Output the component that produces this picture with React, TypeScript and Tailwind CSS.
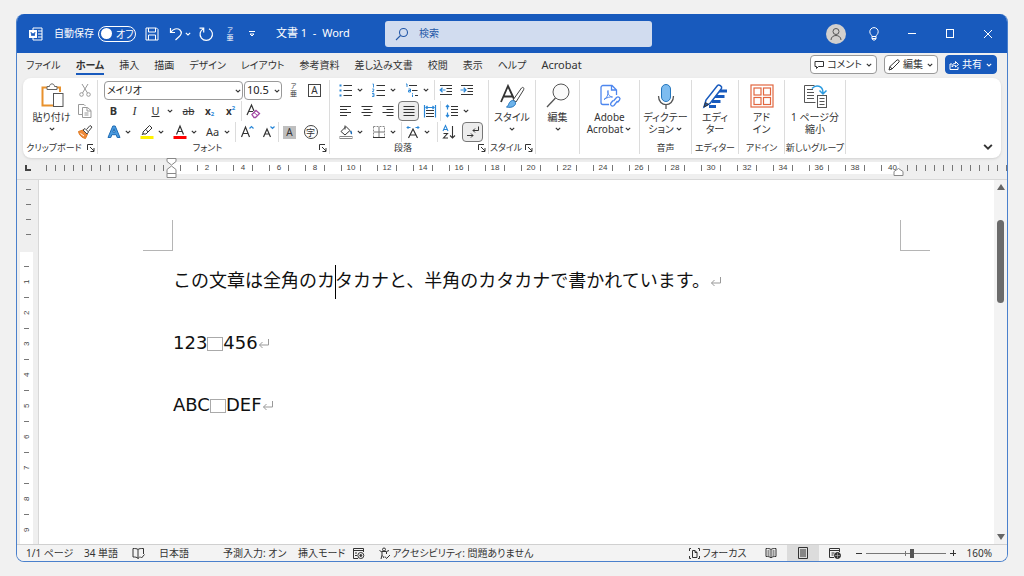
import type { ReactNode } from "react";

const tabs = [
  "ファイル",
  "ホーム",
  "挿入",
  "描画",
  "デザイン",
  "レイアウト",
  "参考資料",
  "差し込み文書",
  "校閲",
  "表示",
  "ヘルプ",
  "Acrobat",
];

const paragraphs = [["123", "456"], ["ABC", "DEF"]];

function Chevron({ className = "w-2 h-2" }: { className?: string }) {
  return (
    <svg viewBox="0 0 8 8" className={`shrink-0 ${className}`} fill="none" stroke="currentColor" strokeWidth="1.1">
      <path d="M1.8 2.8 4 5l2.2-2.2" />
    </svg>
  );
}

function Icon({ children, size = 16 }: { children: ReactNode; size?: number }) {
  return (
    <svg
      width={size}
      height={size}
      viewBox={`0 0 ${size} ${size}`}
      className="shrink-0"
      fill="none"
      stroke="currentColor"
      strokeWidth="1"
    >
      {children}
    </svg>
  );
}

function Tool({ label, active, children }: { label: string; active?: boolean; children: ReactNode }) {
  return (
    <button
      type="button"
      aria-label={label}
      className={`flex h-5 w-[21px] shrink-0 items-center justify-center ${
        active ? "rounded border border-[#777] bg-[#ececec]" : ""
      }`}
    >
      {children}
    </button>
  );
}

function Drop({ label }: { label: string }) {
  return (
    <button type="button" aria-label={label} className="flex h-5 w-3 shrink-0 items-center">
      <Chevron />
    </button>
  );
}

function Sep() {
  return <div className="h-5 w-px shrink-0 bg-[#dcdcdc]" />;
}

function Group({
  label,
  launcher,
  className,
  children,
}: {
  label: string;
  launcher?: boolean;
  className: string;
  children: ReactNode;
}) {
  return (
    <section className={`flex shrink-0 flex-col border-r border-[#dcdcdc] ${className}`}>
      <div className="flex h-[63px] w-full">{children}</div>
      <div className="flex h-3 items-center">
        <div className="flex flex-1 justify-center text-[9px] leading-3 whitespace-nowrap">{label}</div>
        {launcher && (
          <button type="button" aria-label={`${label}の設定`} className="flex w-3 justify-center">
            <svg width="8" height="8" viewBox="0 0 8 8" fill="none" stroke="currentColor">
              <path d="M.5 6V.5H6M3 3l4 4M7 4v3.500H3.500" />
            </svg>
          </button>
        )}
      </div>
    </section>
  );
}

function BigButton({ icon, lines, drop }: { icon: ReactNode; lines: string[]; drop?: "below" | "inline" }) {
  return (
    <button type="button" className="flex flex-1 flex-col items-center text-[10px] leading-3 whitespace-nowrap">
      <span className="flex h-[31px] items-center justify-center">{icon}</span>
      {lines.map((line, i) => (
        <span key={line} className="flex h-3 items-center gap-px">
          {line}
          {drop === "inline" && i === lines.length - 1 && <Chevron />}
        </span>
      ))}
      {drop === "below" && <Chevron className="mt-0.5 h-2 w-2" />}
    </button>
  );
}

function RubyIcon() {
  return (
    <span className="flex flex-col items-center">
      <span className="text-[6px] leading-[8px]">ア</span>
      <span className="text-[7px] leading-[8px]">亜</span>
    </span>
  );
}

function TitleBar() {
  return (
    <header className="grid h-[39px] shrink-0 grid-cols-[368px_minmax(0,267px)_1fr] items-center bg-[#185abd] text-white">
      <div className="flex items-center pl-[11px] text-[11px] whitespace-nowrap">
        <Icon>
          <path d="M5 4.500V2h9v12H5v-2.500M10 5h4M10 8h4M10 11h4" />
          <rect x="1.500" y="4.500" width="7" height="7" fill="#fff" />
          <path d="m3 6 1 4 1-3 1 3 1-4" stroke="#185abd" />
        </Icon>
        <span className="ml-2.5 text-[10px]">自動保存</span>
        <button
          type="button"
          role="switch"
          aria-checked="false"
          aria-label="自動保存"
          className="ml-1 flex h-4 w-[38px] shrink-0 items-center gap-1 rounded-full border border-white px-0.5 text-[10px] leading-3"
        >
          <span className="h-[11px] w-[11px] shrink-0 rounded-full bg-white" />
          オフ
        </button>
        <button type="button" aria-label="保存" className="ml-2">
          <Icon>
            <path d="M2 2h10.500L14 3.500V14H2zM4.500 2v4h7V2M4.500 14V9h7v5" />
          </Icon>
        </button>
        <button type="button" aria-label="元に戻す" className="ml-2">
          <Icon>
            <path strokeWidth="1.200" d="M2.500 2v4.500H7M2.800 6.300C5 3 9 1.500 12 4c2.500 2.500 1 5-1 6.800L7.500 14" />
          </Icon>
        </button>
        <Chevron />
        <button type="button" aria-label="やり直し" className="ml-1.5">
          <Icon>
            <path strokeWidth="1.200" d="M5.500 2.700A6.200 6.200 0 1 0 11 2.700M1.500 2.200h4.200v4.300" />
          </Icon>
        </button>
        <button type="button" aria-label="ルビ" className="ml-2.5 flex w-3 justify-center">
          <RubyIcon />
        </button>
        <button type="button" aria-label="クイック アクセスのカスタマイズ" className="ml-3">
          <Icon size={8}>
            <path d="M1 1.500h6M2 4l2 2 2-2z" />
          </Icon>
        </button>
        <h1 className="ml-5 whitespace-pre">文書 1  -  Word</h1>
      </div>
      <label className="flex h-[26px] items-center gap-2.5 rounded-[3px] bg-[#d1dcef] px-2.5 text-[#2559a8]">
        <Icon size={14}>
          <circle cx="8.500" cy="5.500" r="4" strokeWidth="1.100" />
          <path d="M5.500 8.500 1 13" strokeWidth="1.100" />
        </Icon>
        <input
          type="search"
          aria-label="検索"
          placeholder="検索"
          className="min-w-0 flex-1 bg-transparent text-[10px] outline-none placeholder:text-[#2559a8]"
        />
      </label>
      <div className="flex items-center justify-end pr-[11px]">
        <button
          type="button"
          aria-label="アカウント"
          className="flex h-5 w-5 items-center justify-center rounded-full bg-[#d2d0ce] text-[#555]"
        >
          <Icon size={14}>
            <circle cx="7" cy="4.500" r="3" />
            <path d="M2 13c0-6 10-6 10 0" />
          </Icon>
        </button>
        <button type="button" aria-label="ヒント" className="ml-5">
          <Icon>
            <path d="M6 10.500C6 9 3.800 8.300 3.800 5.800a4.200 4.200 0 0 1 8.400 0C12.200 8.300 10 9 10 10.500zM6 10.500v2l1 1.500h2l1-1.500v-2M6 12.500h4" />
          </Icon>
        </button>
        <button type="button" aria-label="最小化" className="ml-[22px]">
          <Icon>
            <path d="M4 7.500h8" />
          </Icon>
        </button>
        <button type="button" aria-label="最大化" className="ml-[22px]">
          <Icon>
            <rect x="4.500" y="3.500" width="7" height="8" />
          </Icon>
        </button>
        <button type="button" aria-label="閉じる" className="ml-[22px]">
          <Icon>
            <path d="m4 4 8 8M12 4l-8 8" />
          </Icon>
        </button>
      </div>
    </header>
  );
}

function TabBar() {
  const pill = "flex h-[19px] items-center gap-[3px] rounded border px-[3px] text-[10px] whitespace-nowrap";
  return (
    <nav className="flex h-[25px] shrink-0 items-start justify-between pt-0.5 pr-2.5 pl-[9px]">
      <div className="flex items-center gap-[15px] text-[10px] whitespace-nowrap">
        {tabs.map((tab) => (
          <a
            key={tab}
            href="#"
            className={`flex h-5 items-end border-b-2 leading-4 ${
              tab === "ホーム" ? "border-[#185abd] font-bold" : "border-transparent"
            } ${tab === "Acrobat" ? "text-[11px]" : ""}`}
          >
            {tab}
          </a>
        ))}
      </div>
      <div className="flex items-center gap-[7px]">
        <button type="button" className={`${pill} border-[#999] bg-white`}>
          <Icon size={10}>
            <path d="M1 1.500h8.500v5H4.500l-2 2v-2H1z" />
          </Icon>
          コメント
          <Chevron />
        </button>
        <button type="button" className={`${pill} border-[#999] bg-white`}>
          <Icon size={12}>
            <path d="m1 11 1-3.500 7-6.500c1-1 3 1 2 2L4 10zM2 7.500 4 10" />
          </Icon>
          編集
          <Chevron />
        </button>
        <button type="button" className={`${pill} border-[#185abd] bg-[#185abd] text-white`}>
          <Icon size={10}>
            <path d="M3 4H1v5.500h8V7M3 7c0-3 1.500-3.500 3.500-3.500V1.500L9.500 4.500l-3 2.500V5.500C5 5.500 4 5.500 3 7z" />
          </Icon>
          共有
          <Chevron />
        </button>
      </div>
    </nav>
  );
}

function ClipboardGroup() {
  return (
    <Group label="クリップボード" launcher className="w-[75px]">
      <div className="flex w-[51px] pl-1.5">
        <BigButton
          lines={["貼り付け"]}
          drop="below"
          icon={
            <Icon size={26}>
              <path d="M8 4.500H3.500v18H14M18 4.500h3V9" stroke="#e8912d" strokeWidth="2" />
              <path d="M8 6.500V3.500h2.500c0-3.500 5-3.500 5 0H18v3z" fill="#fff" stroke="#666" />
              <rect x="14.500" y="10.500" width="9.500" height="13" fill="#fff" stroke="#555" />
            </Icon>
          }
        />
      </div>
      <div className="flex flex-col gap-px text-[#999]">
        <Tool label="切り取り">
          <Icon>
            <path d="m5 2 5.500 9M11 2 5.500 11" />
            <circle cx="4.500" cy="12.500" r="1.800" />
            <circle cx="11.500" cy="12.500" r="1.800" />
          </Icon>
        </Tool>
        <Tool label="コピー">
          <Icon>
            <path d="M5.500 11.500h-4v-10H7L8.500 3M5.500 4.500h5l3.500 3v7H5.500zM10 4.500v3.500h4M7.500 10h4M7.500 12h4" />
          </Icon>
        </Tool>
        <Tool label="書式のコピー/貼り付け">
          <Icon>
            <path d="M1.500 7.500 6 6l4.500 4-2 4.500C5 14 2 11 1.500 7.500z" fill="#ee8a3a" stroke="#e07b23" />
            <path d="m3.500 9.500 3.500 2.500" stroke="#fff" />
            <path d="m6 6 2-1.500 3.500 3.500-1.500 2zM9.500 5.500 13 1.500l2 1.500-3.500 4.500" fill="#fff" stroke="#444" />
          </Icon>
        </Tool>
      </div>
    </Group>
  );
}

function FontGroup() {
  const select =
    "block h-[19px] w-full appearance-none rounded border border-[#999] bg-white pl-0.5 leading-4 text-[#222]";
  return (
    <Group label="フォント" launcher className="w-[232px]">
      <div className="flex flex-col gap-px pl-[5px]">
        <div className="flex h-5 items-center">
          <div className="relative ml-px w-[139px]">
            <select aria-label="フォント名" className={`${select} text-[10px]`}>
              <option>メイリオ</option>
            </select>
            <Chevron className="pointer-events-none absolute top-1.5 right-px h-2 w-2" />
          </div>
          <div className="relative mr-px ml-px w-[38px]">
            <select aria-label="フォント サイズ" className={`${select} text-[11px]`}>
              <option>10.5</option>
            </select>
            <Chevron className="pointer-events-none absolute top-1.5 right-px h-2 w-2" />
          </div>
          <Tool label="ルビ">
            <RubyIcon />
          </Tool>
          <Tool label="囲み線">
            <span className="flex h-[13px] w-[13px] items-center justify-center border border-[#444] text-[10px] leading-none">
              A
            </span>
          </Tool>
        </div>
        <div className="flex h-5 items-center">
          <Tool label="太字">
            <b className="text-[11px]">B</b>
          </Tool>
          <Tool label="斜体">
            <i className="font-['Liberation_Serif',serif] text-[12px]">I</i>
          </Tool>
          <Tool label="下線">
            <u className="text-[11px]">U</u>
          </Tool>
          <Drop label="下線の種類" />
          <Tool label="取り消し線">
            <s className="text-[10px]">ab</s>
          </Tool>
          <Tool label="下付き">
            <span className="flex items-end text-[10px] leading-[14px] font-bold">
              x<span className="text-[6px] leading-[8px] text-[#2b88d8]">2</span>
            </span>
          </Tool>
          <Tool label="上付き">
            <span className="flex items-start text-[10px] leading-[14px] font-bold">
              x<span className="text-[6px] leading-[8px] text-[#2b88d8]">2</span>
            </span>
          </Tool>
          <Sep />
          <Tool label="書式のクリア">
            <Icon>
              <path d="M2 12 6.500 2 9 8M3.500 8.500H8" strokeWidth="1.200" />
              <path d="m7 11.500 4-4 3.500 3-4 4H9z" fill="#fff" stroke="#a349a4" strokeWidth="1.300" />
              <path d="m9 9.500 3.500 3" stroke="#a349a4" />
            </Icon>
          </Tool>
        </div>
        <div className="flex h-5 items-center">
          <Tool label="文字の効果">
            <Icon>
              <path
                d="M2 13.500 6.800 2h2.400L14 13.500h-2.800l-1-2.800H5.800l-1 2.800zM6.800 8.200h2.400L8 4.800z"
                fill="#4a9be0"
                stroke="#1f6cb5"
              />
            </Icon>
          </Tool>
          <Drop label="文字の効果のオプション" />
          <Tool label="蛍光ペン">
            <Icon>
              <path d="M4 10V8l6.500-6.500 2.500 2.500L7 10zM7 5.500 9 8M4 9.500 3 11" />
              <path d="M1.500 13.500h13" stroke="#fff200" strokeWidth="3" />
            </Icon>
          </Tool>
          <Drop label="蛍光ペンの色" />
          <Tool label="フォントの色">
            <Icon>
              <path d="M4.500 10.500 8 2l3.500 8.500M5.500 7.500h5" strokeWidth="1.200" />
              <path d="M1.500 13.500h13" stroke="#f00" strokeWidth="3" />
            </Icon>
          </Tool>
          <Drop label="フォントの色のオプション" />
          <Tool label="文字種の変換">
            <span className="text-[11px]">Aa</span>
          </Tool>
          <Drop label="文字種の変換のオプション" />
          <Sep />
          <Tool label="フォント サイズの拡大">
            <Icon>
              <path d="M2.500 13 6.500 3l4 10M4 9.500h5" strokeWidth="1.200" />
              <path d="m10.500 4.500 2-2 2 2" stroke="#2b88d8" strokeWidth="1.200" />
            </Icon>
          </Tool>
          <Tool label="フォント サイズの縮小">
            <Icon>
              <path d="M3.500 13 7 5l3.500 8M5 10h4" strokeWidth="1.200" />
              <path d="m10.500 2.500 2 2 2-2" stroke="#2b88d8" strokeWidth="1.200" />
            </Icon>
          </Tool>
          <Sep />
          <Tool label="文字の網かけ">
            <span className="flex h-[13px] w-[13px] items-center justify-center bg-[#bfbfbf] text-[10px] leading-none">
              A
            </span>
          </Tool>
          <Tool label="囲い文字">
            <span className="flex h-[14px] w-[14px] items-center justify-center rounded-full border border-[#444] text-[9px] leading-none">
              字
            </span>
          </Tool>
        </div>
      </div>
    </Group>
  );
}

function ParagraphGroup() {
  return (
    <Group label="段落" launcher className="w-[159px]">
      <div className="flex flex-col gap-px pl-[5px]">
        <div className="flex h-5 items-center">
          <Tool label="箇条書き">
            <Icon>
              <path d="M5.500 3.500H14M5.500 8.500H14M5.500 13.500H14" />
              <path d="M1.500 3.500h2M1.500 8.500h2M1.500 13.500h2" stroke="#2b88d8" strokeWidth="2" />
            </Icon>
          </Tool>
          <Drop label="箇条書きライブラリ" />
          <Tool label="段落番号">
            <Icon>
              <path d="M5.500 3.500H14M5.500 8.500H14M5.500 13.500H14" />
              <path
                d="M1.500 2h1v3.500M1.200 7h1.600v1.300l-1.600 1.400H3M1 11.500h2v3H1M1.500 13H3"
                stroke="#2b88d8"
                strokeWidth=".9"
              />
            </Icon>
          </Tool>
          <Drop label="番号ライブラリ" />
          <Tool label="アウトライン">
            <Icon>
              <path d="M5 3.500h8M8 8.500h5.500M11 13.500h3" />
              <path d="M2 2h1v3M4.500 7h2v3h-2V8.500h2M8.500 11v.8M8.500 12.500v2.500" stroke="#2b88d8" />
            </Icon>
          </Tool>
          <Drop label="リスト ライブラリ" />
          <Sep />
          <Tool label="インデントを減らす">
            <Icon size={14}>
              <path d="M1 2.500h12M7.500 5.500H13M7.500 8.500H13M1 11.500h12" />
              <path d="M6.500 7H1M3.500 4.800 1.200 7l2.300 2.200" stroke="#2b88d8" strokeWidth="1.200" />
            </Icon>
          </Tool>
          <Tool label="インデントを増やす">
            <Icon size={14}>
              <path d="M1 2.500h12M7.500 5.500H13M7.500 8.500H13M1 11.500h12" />
              <path d="M.5 7H6M3.700 4.800 6 7 3.700 9.200" stroke="#2b88d8" strokeWidth="1.200" />
            </Icon>
          </Tool>
        </div>
        <div className="flex h-5 items-center">
          <Tool label="左揃え">
            <Icon>
              <path d="M2 3.500h11M2 6.500h7M2 9.500h11M2 12.500h7" />
            </Icon>
          </Tool>
          <Tool label="中央揃え">
            <Icon>
              <path d="M2.500 3.500h11M4.500 6.500h7M2.500 9.500h11M4.500 12.500h7" />
            </Icon>
          </Tool>
          <Tool label="右揃え">
            <Icon>
              <path d="M2.500 3.500h11M6.500 6.500h7M2.500 9.500h11M6.500 12.500h7" />
            </Icon>
          </Tool>
          <Tool label="両端揃え" active>
            <Icon>
              <path d="M2.500 3.500h11M2.500 6.500h11M2.500 9.500h11M2.500 12.500h11" />
            </Icon>
          </Tool>
          <Tool label="均等割り付け">
            <Icon>
              <path d="M4 7.500h8M4 10.500h8M4 13.500h8" />
              <path
                d="M2.500 2v12.500M13.500 2v12.500M4 4.500h8M5.500 3 4 4.500 5.500 6M10.500 3 12 4.500 10.500 6"
                stroke="#2b88d8"
                strokeWidth="1.200"
              />
            </Icon>
          </Tool>
          <Sep />
          <Tool label="行と段落の間隔">
            <Icon>
              <path d="M7 3.500h7M7 6.500h7M7 9.500h7M7 12.500h7" />
              <path d="M3.500 2.500v4M3.500 9.500v4M2 4l1.500-1.800L5 4M2 12l1.500 1.800L5 12" stroke="#2b88d8" strokeWidth="1.200" />
            </Icon>
          </Tool>
          <Drop label="間隔のオプション" />
        </div>
        <div className="flex h-5 items-center">
          <Tool label="塗りつぶし">
            <Icon>
              <path d="m3 7.500 5-5 4 4-5 4.500zM7 1.500v4" />
              <path d="M12.500 7c1 1.500 1.500 2.300.5 3" stroke="#1f6cb5" strokeWidth="1.500" />
              <rect x="2" y="12.500" width="12" height="2" stroke="#888" fill="#fff" />
            </Icon>
          </Tool>
          <Drop label="塗りつぶしの色" />
          <Tool label="罫線">
            <Icon>
              <path d="M2.500 2.500h11v11M2.500 2.500v11" stroke="#888" strokeDasharray="2 1" />
              <path d="M8 3v10M3 8h10" stroke="#777" />
              <path d="M2 13.500h12" />
            </Icon>
          </Tool>
          <Drop label="罫線の種類" />
          <Sep />
          <Tool label="拡張書式">
            <Icon>
              <path d="m3.500 14 4.500-9 4.500 9M5 11h6" strokeWidth="1.200" />
              <path d="M2 3.500h3.500M10.500 3.500H14M3.500 2 2 3.500 3.500 5M12.500 2 14 3.500 12.500 5" stroke="#2b88d8" />
            </Icon>
          </Tool>
          <Drop label="拡張書式のオプション" />
          <div className="flex pl-0.5">
            <Sep />
          </div>
          <Tool label="並べ替え">
            <Icon>
              <path d="m2 7 2.500-5.500L7 7M3 5.500h3" stroke="#2b88d8" strokeWidth="1.100" />
              <path d="M2.500 9.500h4l-4 4.500h4.500M11.500 2v12M9 11.500l2.500 2.500 2.500-2.500" strokeWidth="1.100" />
            </Icon>
          </Tool>
          <div className="pl-[3px]">
            <Tool label="編集記号の表示/非表示" active>
              <Icon>
                <path d="M13.500 2.500v4H8M10 4.500l-2 2 2 2M2 11.500h6M6 9.500l2 2-2 2" />
              </Icon>
            </Tool>
          </div>
        </div>
      </div>
    </Group>
  );
}

function Ribbon() {
  return (
    <div className="mx-1.5 flex h-20 shrink-0 rounded-lg bg-white pt-0.5 pb-1 shadow-sm">
      <ClipboardGroup />
      <FontGroup />
      <ParagraphGroup />
      <Group label="スタイル" launcher className="w-[47px]">
        <BigButton
          lines={["スタイル"]}
          drop="below"
          icon={
            <Icon size={26}>
              <path d="M2 19 9 3l6 13M4.500 13.500h9" stroke="#333" strokeWidth="1.800" />
              <path d="m14 17 8.500-12c1.500-1.500 3 0 2 2L17 19z" fill="#fff" stroke="#444" />
              <path d="M7.500 24c2.500-1 2-6 6-6.500 3 0 4 3 2 5s-5 2.200-8 1.500z" fill="#6db3ea" stroke="#2576bd" />
            </Icon>
          }
        />
      </Group>
      <Group label="" className="w-[44px]">
        <BigButton
          lines={["編集"]}
          drop="below"
          icon={
            <Icon size={26}>
              <circle cx="16" cy="9" r="8" fill="#fafafa" stroke="#555" />
              <path d="M10.500 15 2 24" stroke="#555" strokeWidth="1.300" />
            </Icon>
          }
        />
      </Group>
      <Group label="" className="w-[60px]">
        <BigButton
          lines={["Adobe", "Acrobat"]}
          drop="inline"
          icon={
            <Icon size={26}>
              <path
                d="M12 21.500H6a2 2 0 0 1-2-2v-15a2 2 0 0 1 2-2h9l4.500 4.500v5M14.500 2.500V7h5"
                stroke="#4d86ee"
                strokeWidth="1.300"
              />
              <path d="M7 16.500c3-1.500 4.500-5 4-9-1 2.500 1.500 6.500 4.500 6.500-2-.5-6 .5-8.500 2.500z" stroke="#4d86ee" />
              <path
                d="m16.500 18 3-3.500c2-1.500 4.500.5 3 2.500l-2 2.500M20.500 18l-3.500 4.500c-2 1.500-4.500-.5-3-2.500l2-2.500"
                stroke="#4d86ee"
                strokeWidth="1.300"
              />
            </Icon>
          }
        />
      </Group>
      <Group label="音声" className="w-[52px]">
        <BigButton
          lines={["ディクテー", "ション"]}
          drop="inline"
          icon={
            <Icon size={26}>
              <rect x="8.500" y="1.500" width="9" height="17" rx="4.500" fill="#7dbcf0" stroke="#2576bd" />
              <path d="M5.500 13c0 11.500 15 11.500 15 0M13 21.500V26" stroke="#555" strokeWidth="1.300" />
            </Icon>
          }
        />
      </Group>
      <Group label="エディター" className="w-[47px]">
        <BigButton
          lines={["エディ", "ター"]}
          icon={
            <Icon size={26}>
              <path d="M15 8h10M13 13.500h9.500M10 18.500h8.500M7 23.500h7" stroke="#185abd" strokeWidth="3" />
              <path d="m2 24 2-7L15.500 2.500c1.500-1.500 5 1 4 3L8 20.500z" fill="#fff" stroke="#185abd" strokeWidth="1.500" />
              <path d="m2 24 1.500-4.500 3 2z" fill="#185abd" />
            </Icon>
          }
        />
      </Group>
      <Group label="アドイン" className="w-[46px]">
        <BigButton
          lines={["アド", "イン"]}
          icon={
            <Icon size={26}>
              <g stroke="#e2663f" strokeWidth="1.200">
                <rect x="2" y="2" width="22" height="22" />
                <rect x="5" y="5" width="7" height="7" />
                <rect x="14.500" y="5" width="7" height="7" />
                <rect x="5" y="14.500" width="7" height="7" />
                <rect x="14.500" y="14.500" width="7" height="7" />
              </g>
            </Icon>
          }
        />
      </Group>
      <Group label="新しいグループ" className="w-[61px]">
        <BigButton
          lines={["1 ページ分", "縮小"]}
          icon={
            <Icon size={26}>
              <path d="M13.500 19.500h-11v-17h10M5 6.500h6M5 9.500h7M5 12.500h7M5 15.500h7" stroke="#555" />
              <rect x="15.500" y="12.500" width="9" height="12" fill="#fff" stroke="#555" />
              <path d="M17.500 15.500h5M17.500 18.500h5M17.500 21.500h5" stroke="#555" />
              <path d="M10 5.500C14 1 21 2.500 21 10M17.500 7.500 21 11l3.500-3.500" stroke="#2b9be0" strokeWidth="1.500" />
            </Icon>
          }
        />
      </Group>
      <button type="button" aria-label="リボンの表示オプション" className="mr-1.5 ml-auto self-end">
        <Chevron className="h-3.5 w-3.5" />
      </button>
    </div>
  );
}

function Tick() {
  return <span className="h-1.5 w-px bg-[#777]" />;
}

function HorizontalRuler() {
  const marks = Array.from({ length: 19 }, (_, i) => (i + 1) * 2);
  return (
    <div className="flex h-[22px] shrink-0 items-center overflow-hidden border-b border-[#d8d8d8] pb-0.5 font-['Liberation_Sans',sans-serif] text-[8px] leading-3 text-[#444]">
      <span className="flex w-[25px] shrink-0 pl-2">
        <span className="h-1.5 w-1.5 border-b-2 border-l-2 border-[#444]" />
      </span>
      <div className="flex w-[129px] shrink-0">
        {Array.from({ length: 14 }, (_, i) => (
          <span key={i} className="flex w-[9px] justify-center">
            <Tick />
          </span>
        ))}
      </div>
      <div className="relative flex h-3 w-[728px] shrink-0 items-center bg-white">
        <span className="flex w-[18px] shrink-0 justify-center">
          <Tick />
        </span>
        {marks.map((n) => (
          <span key={n} className="flex w-9 shrink-0 items-center justify-between px-2">
            <Tick />
            {n}
            <Tick />
          </span>
        ))}
        <span className="flex w-[26px] shrink-0 items-center justify-between pr-0.5 pl-2">
          <Tick />
          40
        </span>
        <svg width="11" height="20" viewBox="0 0 11 20" className="absolute -top-1 -left-[5px]" fill="#fff" stroke="#888">
          <path d="M1 .5h9v3L5.500 7 1 3.500zM1 15.500v-4L5.500 8 10 11.500v4zM1 15.500h9v4H1z" />
        </svg>
        <svg width="11" height="9" viewBox="0 0 11 9" className="absolute top-1.5 -right-[5px]" fill="#fff" stroke="#888">
          <path d="M1 7.500v-4L5.500.5 10 3.500v4z" />
        </svg>
      </div>
      <div className="flex pl-1">
        {Array.from({ length: 12 }, (_, i) => (
          <span key={i} className="flex w-[9px] shrink-0 justify-center">
            <Tick />
          </span>
        ))}
      </div>
    </div>
  );
}

function VerticalRuler() {
  return (
    <div className="flex w-[22px] shrink-0 flex-col overflow-hidden border-r border-[#d8d8d8] pl-[3px] font-['Liberation_Sans',sans-serif] text-[8px] text-[#444]">
      <div className="flex h-[72px] w-[13px] shrink-0 flex-col items-center gap-[14px] pt-[9px] pl-1">
        {[0, 1, 2, 3].map((i) => (
          <span key={i} className="h-px w-[5px] shrink-0 bg-[#777]" />
        ))}
      </div>
      <div className="flex w-[13px] flex-1 flex-col items-center overflow-hidden bg-white pt-3.5">
        {[1, 2, 3, 4, 5, 6, 7, 8, 9].map((n) => (
          <span key={n} className="flex h-[31px] shrink-0 flex-col items-center">
            <span className="h-px w-[5px] bg-[#777]" />
            <span className="flex flex-1 rotate-180 items-center justify-center leading-3 [writing-mode:vertical-rl]">
              {n}
            </span>
          </span>
        ))}
      </div>
    </div>
  );
}

function ReturnMark() {
  return (
    <svg width="12" height="12" viewBox="0 0 12 12" className="inline-block align-middle" fill="none" stroke="#999">
      <path d="M10.500 1v6H1.500M4.500 4l-3 3 3 3" />
    </svg>
  );
}

function Document() {
  return (
    <main className="min-w-0 flex-1 overflow-hidden bg-white pt-10">
      <div className="-mb-px flex justify-between pr-16 pl-[104px]">
        <span className="h-[31px] w-[30px] border-r border-b border-[#b5b5b5]" />
        <span className="h-[31px] w-[30px] border-b border-l border-[#b5b5b5]" />
      </div>
      <div className="pl-[134px] font-['DejaVu_Sans','Noto_Sans_CJK_JP',sans-serif] text-[18px] leading-[62px] whitespace-nowrap text-[#111] [font-feature-settings:normal]">
        <p>
          この文章は全角のカ
          <span className="-mr-px inline-block h-[34px] w-px bg-black align-middle" />
          タカナと、半角のカタカナで書かれています。
          <ReturnMark />
        </p>
        {paragraphs.map(([before, after]) => (
          <p key={before}>
            {before}
            <span className="inline-block h-3.5 w-4 border border-[#aaa] align-middle" />
            {after}
            <ReturnMark />
          </p>
        ))}
      </div>
    </main>
  );
}

function ScrollBar() {
  return (
    <div className="flex w-[13px] shrink-0 flex-col items-center bg-[#f3f3f3] py-1 text-[#666]">
      <svg width="8" height="6" viewBox="0 0 8 6" fill="currentColor">
        <path d="M4 0 8 6H0z" />
      </svg>
      <div className="mt-[30px] h-[83px] w-[7px] rounded-full bg-[#6b6b6b]" />
      <svg width="8" height="6" viewBox="0 0 8 6" className="mt-auto" fill="currentColor">
        <path d="M0 0h8L4 6z" />
      </svg>
    </div>
  );
}

function StatusBar() {
  return (
    <footer className="flex h-[17px] shrink-0 items-center justify-between border-t border-[#d0d0d0] bg-[#f3f3f3] pr-[15px] pl-[9px] text-[10px] leading-3 whitespace-nowrap">
      <div className="flex items-center">
        <span className="w-[58px]">1/1 ページ</span>
        <span className="w-12">34 単語</span>
        <span className="w-[27px]">
          <Icon size={13}>
            <path d="M6 2.500C5 1.500 3 1.500 1 1.500v8.500c2 0 4 0 5 1.500V2.500C7 1.500 9 1.500 11.500 1.500V7M6 11.500l1.500-1M8 9.500l1.500 1.500 3-3.500" />
          </Icon>
        </span>
        <span className="w-16">日本語</span>
        <span className="w-[75px]">予測入力: オン</span>
        <span className="w-[54px]">挿入モード</span>
        <span className="w-[26px]">
          <Icon size={13}>
            <path d="M6 11.500H1.500v-10h10V5M1.500 3.500h10M3 6h2M3 8.500h2" />
            <circle cx="8.800" cy="8.500" r="3" />
            <circle cx="8.800" cy="8.500" r="1" fill="currentColor" />
          </Icon>
        </span>
        <span className="flex items-center gap-px">
          <Icon size={13}>
            <path d="M1.500 3.500 4 5v3L3 12M4 4.500h4.500L11 3.500M8.500 5v2M4.500 8.500 6 11" />
            <circle cx="6" cy="2.500" r="1.500" />
            <path d="M7 9.500 8.500 11.500 12 8" />
          </Icon>
          アクセシビリティ: 問題ありません
        </span>
      </div>
      <div className="flex items-center">
        <button type="button" className="flex items-center gap-px">
          <Icon size={13}>
            <path d="M3 1.500H1.500V4M10 1.500h1.500V4M1.500 9v2.500H3M11.500 9v2.500H10M4.500 3.500h2.500L9 5.500v5H4.500zM7 3.500v2h2" />
          </Icon>
          フォーカス
        </button>
        <button type="button" aria-label="閲覧モード" className="ml-2 flex h-4 w-8 items-center justify-center">
          <Icon size={12}>
            <path d="M6 2.500C5 1.500 3 1.500 1 1.500v8c2 0 4 0 5 1.500 1-1.500 3-1.500 5-1.500v-8c-2 0-4 0-5 1zM6 2.500V11M2.500 4h2M2.500 6h2M7.500 4h2M7.500 6h2M2.500 8h2M7.500 8h2" />
          </Icon>
        </button>
        <button type="button" aria-label="印刷レイアウト" className="flex h-4 w-8 items-center justify-center bg-[#dcdcdc]">
          <Icon size={12}>
            <path d="M1.500.5h9v11h-9zM3 3h6M3 5h6M3 7h6M3 9h6" />
          </Icon>
        </button>
        <button type="button" aria-label="Web レイアウト" className="flex h-4 w-8 items-center justify-center">
          <Icon size={12}>
            <path d="M5 10.500H.5v-9h10V5M.5 3.500h10M2.500 6h3M2.500 8h2" />
            <circle cx="8.500" cy="8.500" r="3" fill="#333" />
            <path d="M8.500 6v5M6 8.500h5" stroke="#bbb" strokeWidth=".6" />
          </Icon>
        </button>
        <button type="button" aria-label="縮小" className="ml-1 flex h-4 w-2 items-center justify-center">
          <Icon size={8}>
            <path d="M1 4.500h6" />
          </Icon>
        </button>
        <input
          type="range"
          min={0}
          max={100}
          defaultValue={58}
          aria-label="ズーム"
          className="mx-[3px] h-3 w-20 appearance-none bg-[linear-gradient(#777,#777),linear-gradient(#777,#777)] bg-[length:100%_1px,1px_5px] bg-center bg-no-repeat [&::-webkit-slider-thumb]:h-[9px] [&::-webkit-slider-thumb]:w-1 [&::-webkit-slider-thumb]:appearance-none [&::-webkit-slider-thumb]:bg-[#555]"
        />
        <button type="button" aria-label="拡大" className="flex h-4 w-2 items-center justify-center">
          <Icon size={8}>
            <path d="M1 4.500h6M4.500 1v6" />
          </Icon>
        </button>
        <span className="ml-2.5">160%</span>
      </div>
    </footer>
  );
}

export default function App() {
  return (
    <div className="flex h-screen bg-[#f1f1f1] px-4 py-3.5 font-['Noto_Sans','Noto_Sans_CJK_JP',sans-serif] text-[#333] [font-feature-settings:'palt']">
      <div className="flex min-w-0 flex-1 flex-col overflow-hidden rounded-lg border border-t-0 border-[#4a80cc] bg-[#efefef]">
        <TitleBar />
        <TabBar />
        <Ribbon />
        <HorizontalRuler />
        <div className="flex min-h-0 flex-1">
          <VerticalRuler />
          <Document />
          <ScrollBar />
        </div>
        <StatusBar />
      </div>
    </div>
  );
}
